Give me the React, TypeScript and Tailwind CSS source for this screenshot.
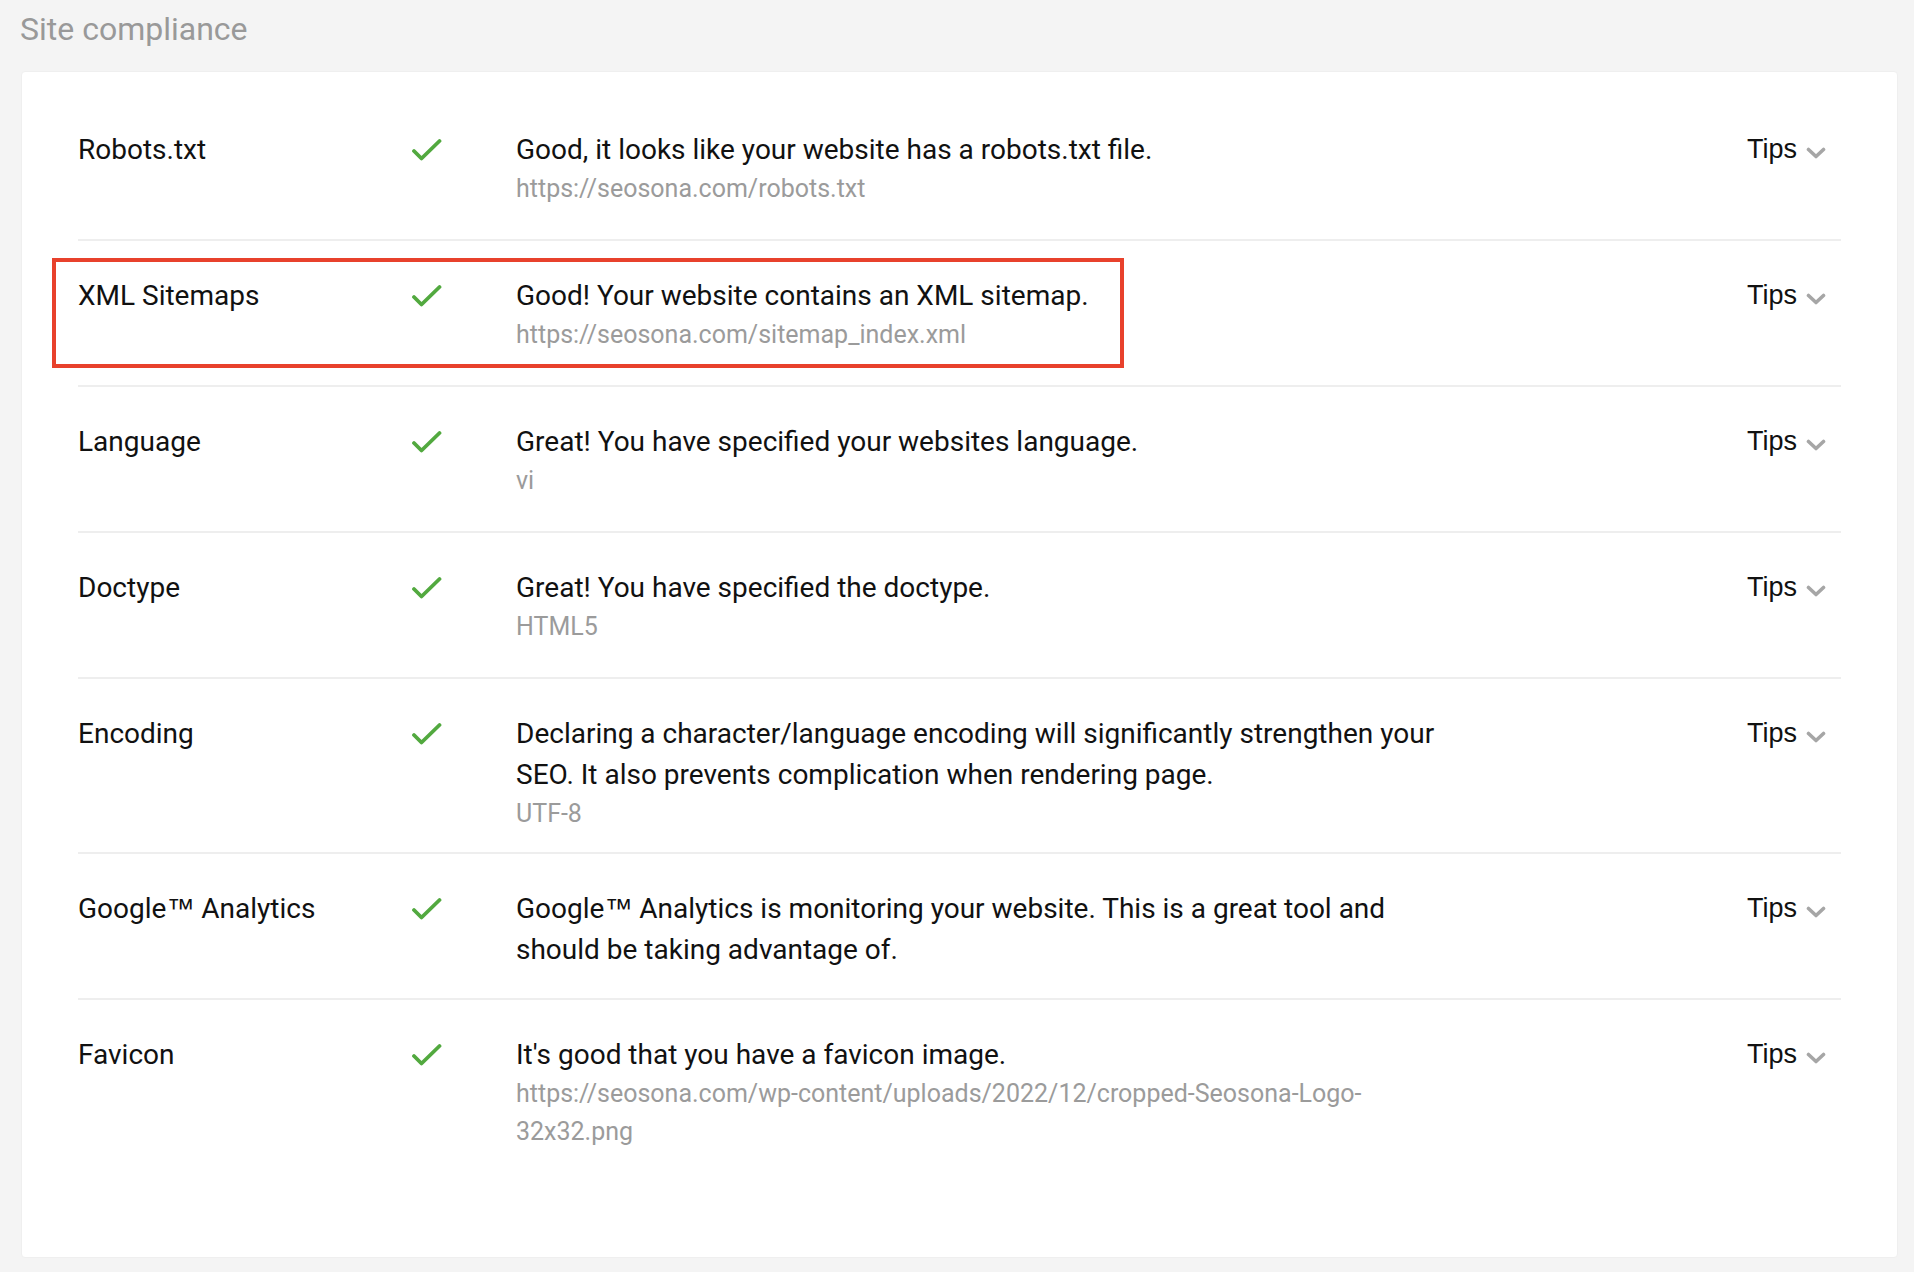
import React from 'react';

type Item = {
  label: React.ReactNode;
  key: string;
  text: React.ReactNode;
  detail?: string;
};

const TM = () => <span className="font-['Liberation_Sans',Arial,sans-serif]">™</span>;

const ITEMS: Item[] = [
  { key: 'robots', label: 'Robots.txt', text: 'Good, it looks like your website has a robots.txt file.', detail: 'https://seosona.com/robots.txt' },
  { key: 'sitemap', label: 'XML Sitemaps', text: 'Good! Your website contains an XML sitemap.', detail: 'https://seosona.com/sitemap_index.xml' },
  { key: 'lang', label: 'Language', text: 'Great! You have specified your websites language.', detail: 'vi' },
  { key: 'doctype', label: 'Doctype', text: 'Great! You have specified the doctype.', detail: 'HTML5' },
  {
    key: 'encoding',
    label: 'Encoding',
    text: 'Declaring a character/language encoding will significantly strengthen your SEO. It also prevents complication when rendering page.',
    detail: 'UTF-8',
  },
  {
    key: 'ga',
    label: (
      <>
        Google<TM /> Analytics
      </>
    ),
    text: (
      <>
        Google<TM /> Analytics is monitoring your website. This is a great tool and should be taking advantage of.
      </>
    ),
  },
  {
    key: 'favicon',
    label: 'Favicon',
    text: "It's good that you have a favicon image.",
    detail: 'https://seosona.com/wp-content/uploads/2022/12/cropped-Seosona-Logo-32x32.png',
  },
];

const Check = () => (
  <svg width="31" height="24" viewBox="0 0 31 24" fill="none">
    <path d="M3 13 L10.5 20.5 L28.5 3" stroke="#52a93f" strokeWidth="3.8" strokeLinecap="round" strokeLinejoin="round" />
  </svg>
);

const Chevron = () => (
  <svg width="20" height="12" viewBox="0 0 20 12" fill="none">
    <path d="M2.5 2.5 L10 9.5 L17.5 2.5" stroke="#a6a6a6" strokeWidth="3.6" strokeLinecap="round" strokeLinejoin="round" />
  </svg>
);

export default function App() {
  return (
    <div className="min-h-[1272px] w-full bg-[#f4f4f4] pt-[8px] font-['Roboto',sans-serif]">
      <h2 className="pl-[20px] text-[32px] leading-[42px] text-[#999999]">Site compliance</h2>

      <div className="mx-[21px] mt-[21px] w-[1877px] rounded-[4px] border border-[#efefef] bg-white px-[56px] pt-[23px] pb-[87px]">
        {ITEMS.map((item, i) => (
          <div
            key={item.key}
            className={`relative grid min-h-[146px] grid-cols-[333px_105px_935px_1fr] pt-[34px] pb-[19px] ${
              i < ITEMS.length - 1 ? 'border-b-2 border-[#eeeeee]' : ''
            }`}
          >
            {item.key === 'sitemap' && (
              <div className="pointer-events-none absolute left-[-26px] top-[17px] h-[110px] w-[1072px] border-[4px] border-[#e8412c]" />
            )}
            <div className="text-[28px] leading-[41px] text-[#111111]">{item.label}</div>
            <div className="pt-[9px]">
              <Check />
            </div>
            <div>
              <div className="text-[28px] leading-[41px] text-[#111111]">{item.text}</div>
              {item.detail && (
                <div className="break-words text-[25px] leading-[38px] text-[#9b9b9b]">{item.detail}</div>
              )}
            </div>
            <div className="flex items-start justify-end pr-[15px]">
              <span className="flex items-center gap-[9px] font-['Liberation_Sans',Arial,sans-serif] text-[27px] leading-[41px] text-[#111111]">
                Tips
                <span className="pt-[6px]">
                  <Chevron />
                </span>
              </span>
            </div>
          </div>
        ))}
      </div>
    </div>
  );
}
